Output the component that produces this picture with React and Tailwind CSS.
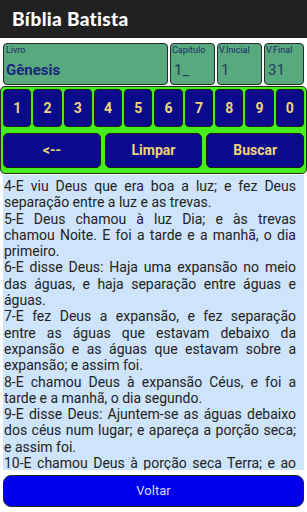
import React from "react";

const verses = [
  "4-E viu Deus que era boa a luz; e fez Deus separação entre a luz e as trevas.",
  "5-E Deus chamou à luz Dia; e às trevas chamou Noite. E foi a tarde e a manhã, o dia primeiro.",
  "6-E disse Deus: Haja uma expansão no meio das águas, e haja separação entre águas e águas.",
  "7-E fez Deus a expansão, e fez separação entre as águas que estavam debaixo da expansão e as águas que estavam sobre a expansão; e assim foi.",
  "8-E chamou Deus à expansão Céus, e foi a tarde e a manhã, o dia segundo.",
  "9-E disse Deus: Ajuntem-se as águas debaixo dos céus num lugar; e apareça a porção seca; e assim foi.",
  "10-E chamou Deus à porção seca Terra; e ao ajuntamento das águas chamou Mares; e viu Deus que era bom.",
];

function Tile({ label, value, className, valueClass }) {
  return (
    <div className={"flex flex-col rounded-[4px] border border-[#2a2a2a] bg-[#58a97d] px-[1px] " + className}>
      <span className="text-[9px] leading-[11px] mt-[1px] text-[#1c2a6a]">{label}</span>
      <span className={"mt-[5px] text-[15px] leading-[18px] " + valueClass}>{value}</span>
    </div>
  );
}

export default function App() {
  const digits = ["1", "2", "3", "4", "5", "6", "7", "8", "9", "0"];
  return (
    <div className="w-[307px] h-[512px] bg-white flex flex-col overflow-hidden" style={{ fontFamily: "Roboto, 'Liberation Sans', sans-serif" }}>
      <div className="h-[38px] shrink-0 bg-[#212121] flex items-center pl-[12px]">
        <span className="text-white text-[19px] font-black tracking-[0.3px]" style={{ fontFamily: "Lato, 'Open Sans', sans-serif" }}>
          Bíblia Batista
        </span>
      </div>
      <div className="mt-[5px] h-[42px] shrink-0 flex gap-[2px] px-[3px]">
        <Tile label="Livro" value="Gênesis" className="w-[165px] pl-[2px]" valueClass="font-bold text-[#1a2580]" />
        <Tile label="Capítulo" value="1_" className="w-[45px]" valueClass="text-[#1c3d5e] pl-[2px]" />
        <Tile label="V.Inicial" value="1" className="w-[45px]" valueClass="text-[#1c3d5e] pl-[2px]" />
        <Tile label="V.Final" value="31" className="flex-1" valueClass="text-[#1c3d5e] pl-[2px]" />
      </div>
      <div className="mt-[1px] h-[88px] shrink-0 rounded-[5px] border border-[#2a2a2a] bg-[#46ee1e] px-[2px] pt-[2px] flex flex-col">
        <div className="h-[38px] flex gap-[2px]">
          {digits.map((d) => (
            <div key={d} className="flex-1 rounded-[4px] border border-[#1a1a1a] bg-[#0a0a8c] flex items-center justify-center text-[#f0d57a] font-bold text-[14px]">
              {d}
            </div>
          ))}
        </div>
        <div className="mt-[6px] h-[35px] flex gap-[4px]">
          {["<--", "Limpar", "Buscar"].map((t) => (
            <div key={t} className="flex-1 rounded-[5px] border border-[#1a1a1a] bg-[#0a0a8c] flex items-center justify-center text-[#f0d57a] font-bold text-[14px]">
              {t}
            </div>
          ))}
        </div>
      </div>
      <div className="mt-[1px] mx-[3px] h-[295px] shrink-0 bg-[#cde4fb] overflow-hidden pl-[1px] pr-[8px] pt-[3px]">
        {verses.map((v) => (
          <p key={v} className="text-[14px] leading-[16.3px] text-[#222] text-justify">
            {v}
          </p>
        ))}
      </div>
      <div className="mt-[5px] mx-[3px] h-[32px] shrink-0 rounded-[8px] border border-[#222] bg-[#0000ee] flex items-center justify-center text-[#d4dcff] text-[13px]">
        Voltar
      </div>
    </div>
  );
}
